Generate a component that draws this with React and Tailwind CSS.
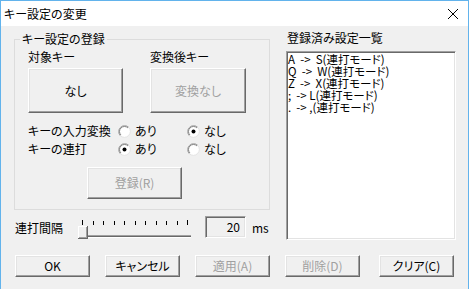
import React from "react";

const Btn = ({ children, disabled, className }) => (
  <div
    className={`flex items-center justify-center bg-[#f0f0f0] border border-t-[#ffffff] border-l-[#ffffff] border-b-[#696969] border-r-[#696969] shadow-[inset_-1px_-1px_0_#a0a0a0,inset_1px_1px_0_#e3e3e3] text-[12px] ${
      disabled ? "text-[#a0a0a0]" : "text-black"
    } ${className}`}
  >
    {children}
  </div>
);

const Radio = ({ checked }) => (
  <svg width="13" height="13" viewBox="0 0 13 13" className="shrink-0">
    <circle cx="6.5" cy="6.5" r="6" fill="#ffffff" />
    <path d="M2.26 10.74 A6 6 0 0 1 10.74 2.26" stroke="#a0a0a0" fill="none" />
    <path d="M10.74 2.26 A6 6 0 0 1 2.26 10.74" stroke="#e3e3e3" fill="none" />
    <path d="M2.96 10.04 A5 5 0 0 1 10.04 2.96" stroke="#696969" fill="none" strokeWidth="0.8" />
    {checked && <circle cx="6.5" cy="6.5" r="2" fill="#000000" />}
  </svg>
);

const RadioRow = ({ label, first }) => (
  <div className="flex items-center h-[18px]">
    <span className="w-[90px] shrink-0">{label}</span>
    <div className="flex items-center w-[69px] shrink-0">
      <Radio checked={first} />
      <span className="ml-[4px]">あり</span>
    </div>
    <div className="flex items-center">
      <Radio checked={!first} />
      <span className="ml-[4px]">なし</span>
    </div>
  </div>
);

const Slider = () => {
  const ticks = Array.from({ length: 11 }, (_, i) => Math.round(4 + i * 10.5) + 0.5);
  return (
    <svg width="114" height="24" viewBox="0 0 114 24" className="shrink-0 self-start">
      {ticks.map((x, i) => (
        <line
          key={i}
          x1={x}
          x2={x}
          y1={i === 0 || i === 10 ? 4 : 5}
          y2={9}
          stroke="#000000"
        />
      ))}
      <line x1="2" x2="113" y1="19.5" y2="19.5" stroke="#a0a0a0" />
      <line x1="2" x2="113" y1="20.5" y2="20.5" stroke="#696969" />
      <line x1="2" x2="113" y1="21.5" y2="21.5" stroke="#ffffff" />
      <rect x="0" y="10" width="10" height="13" fill="#f0f0f0" />
      <line x1="0.5" x2="0.5" y1="10" y2="23" stroke="#ffffff" />
      <line x1="0" x2="10" y1="10.5" y2="10.5" stroke="#ffffff" />
      <line x1="9.5" x2="9.5" y1="10" y2="23" stroke="#696969" />
      <line x1="0" x2="10" y1="22.5" y2="22.5" stroke="#696969" />
      <line x1="8.5" x2="8.5" y1="11" y2="22" stroke="#a0a0a0" />
      <line x1="1" x2="9" y1="21.5" y2="21.5" stroke="#a0a0a0" />
    </svg>
  );
};

export default function App() {
  const items = [
    "A  ->  S(連打モード)",
    "Q  ->  W(連打モード)",
    "Z  ->  X(連打モード)",
    ";  -> L(連打モード)",
    ".  -> ,(連打モード)",
  ];
  return (
    <div className="w-[469px] h-[289px] border-x border-t border-[#62b3ec] bg-[#f0f0f0] flex flex-col overflow-hidden font-['Noto_Sans_CJK_JP',sans-serif] [font-feature-settings:'palt'] text-[12px] leading-[16px] text-black">
      <div className="h-[25px] shrink-0 bg-white flex items-center justify-between pl-[3px] pr-[10px]">
        <span className="text-[12px]">キー設定の変更</span>
        <svg width="10" height="10" viewBox="0 0 10 10">
          <path d="M0 0 L10 10 M10 0 L0 10" stroke="#000000" strokeWidth="1" />
        </svg>
      </div>
      <div className="flex flex-col flex-1">
        <div className="flex pt-[4px]">
          <div className="flex flex-col ml-[13px] w-[256px]">
            <fieldset className="mt-[1px] border border-[#dcdcdc] pb-[10px] min-w-0">
              <legend className="ml-[5px] px-[2px] leading-[16px]">キー設定の登録</legend>
              <div className="pl-[13px] pt-[2px] flex flex-col">
                <div className="flex h-[16px]">
                  <span className="w-[122px]">対象キー</span>
                  <span>変換後キー</span>
                </div>
                <div className="flex mt-[3px]">
                  <Btn className="w-[95px] h-[45px]">なし</Btn>
                  <Btn disabled className="w-[96px] h-[45px] ml-[27px]">変換なし</Btn>
                </div>
                <div className="mt-[9px]">
                  <RadioRow label="キーの入力変換" first={false} />
                  <RadioRow label="キーの連打" first={true} />
                </div>
                <Btn disabled className="w-[95px] h-[32px] ml-[59px] mt-[9px]">登録(R)</Btn>
              </div>
            </fieldset>
            <div className="flex items-center h-[24px] mt-[6px]">
              <span className="ml-[1px] w-[63px] shrink-0">連打間隔</span>
              <Slider />
              <div className="ml-[13px] w-[41px] h-[22px] self-start border border-t-[#a0a0a0] border-l-[#a0a0a0] border-b-[#ffffff] border-r-[#ffffff] shadow-[inset_1px_1px_0_#696969,inset_-1px_-1px_0_#e3e3e3] bg-[#f0f0f0] flex items-center justify-end pr-[5px]">
                20
              </div>
              <span className="ml-[6px]">ms</span>
            </div>
          </div>
          <div className="flex flex-col ml-[16px] w-[170px]">
            <div className="h-[16px] pl-[1px]">登録済み設定一覧</div>
            <div className="mt-[5px] h-[189px] bg-white border border-t-[#a0a0a0] border-l-[#a0a0a0] border-b-[#ffffff] border-r-[#ffffff] shadow-[inset_1px_1px_0_#696969,inset_-1px_-1px_0_#e3e3e3] pt-[1px] pl-[1px]">
              {items.map((t) => (
                <div key={t} className="whitespace-pre text-[11.5px] leading-[12px] h-[12px]">
                  {t}
                </div>
              ))}
            </div>
          </div>
        </div>
        <div className="flex mt-[15px] ml-[14px]">
          <Btn className="w-[75px] h-[22px]">OK</Btn>
          <Btn className="w-[75px] h-[22px] ml-[15px]">キャンセル</Btn>
          <Btn disabled className="w-[75px] h-[22px] ml-[15px]">適用(A)</Btn>
          <Btn disabled className="w-[75px] h-[22px] ml-[15px]">削除(D)</Btn>
          <Btn className="w-[75px] h-[22px] ml-[19px]">クリア(C)</Btn>
        </div>
      </div>
    </div>
  );
}
